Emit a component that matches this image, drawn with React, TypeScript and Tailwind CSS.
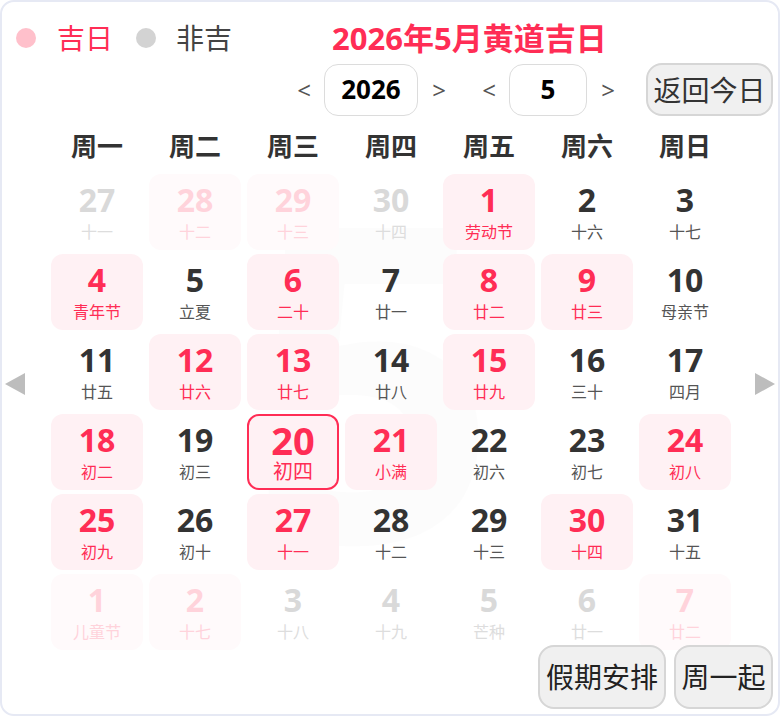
import React from 'react';

type Day = {
  d: number;
  lunar: string;
  good?: boolean;
  other?: boolean;
  today?: boolean;
};

const weeks = ['周一', '周二', '周三', '周四', '周五', '周六', '周日'];

const days: Day[] = [
  { d: 27, lunar: '十一', other: true },
  { d: 28, lunar: '十二', other: true, good: true },
  { d: 29, lunar: '十三', other: true, good: true },
  { d: 30, lunar: '十四', other: true },
  { d: 1, lunar: '劳动节', good: true },
  { d: 2, lunar: '十六' },
  { d: 3, lunar: '十七' },
  { d: 4, lunar: '青年节', good: true },
  { d: 5, lunar: '立夏' },
  { d: 6, lunar: '二十', good: true },
  { d: 7, lunar: '廿一' },
  { d: 8, lunar: '廿二', good: true },
  { d: 9, lunar: '廿三', good: true },
  { d: 10, lunar: '母亲节' },
  { d: 11, lunar: '廿五' },
  { d: 12, lunar: '廿六', good: true },
  { d: 13, lunar: '廿七', good: true },
  { d: 14, lunar: '廿八' },
  { d: 15, lunar: '廿九', good: true },
  { d: 16, lunar: '三十' },
  { d: 17, lunar: '四月' },
  { d: 18, lunar: '初二', good: true },
  { d: 19, lunar: '初三' },
  { d: 20, lunar: '初四', good: true, today: true },
  { d: 21, lunar: '小满', good: true },
  { d: 22, lunar: '初六' },
  { d: 23, lunar: '初七' },
  { d: 24, lunar: '初八', good: true },
  { d: 25, lunar: '初九', good: true },
  { d: 26, lunar: '初十' },
  { d: 27, lunar: '十一', good: true },
  { d: 28, lunar: '十二' },
  { d: 29, lunar: '十三' },
  { d: 30, lunar: '十四', good: true },
  { d: 31, lunar: '十五' },
  { d: 1, lunar: '儿童节', other: true, good: true },
  { d: 2, lunar: '十七', other: true, good: true },
  { d: 3, lunar: '十八', other: true },
  { d: 4, lunar: '十九', other: true },
  { d: 5, lunar: '芒种', other: true },
  { d: 6, lunar: '廿一', other: true },
  { d: 7, lunar: '廿二', other: true, good: true },
];

function DayCell({ day }: { day: Day }) {
  let box = 'bg-transparent';
  let num = 'text-[#333333]';
  let sub = 'text-[#555555]';

  if (day.other) {
    box = day.good ? 'bg-[#fffafb]' : 'bg-transparent';
    num = day.good ? 'text-[#ffd3db]' : 'text-[#d9d9d9]';
    sub = day.good ? 'text-[#ffd3db]' : 'text-[#dddddd]';
  } else if (day.good) {
    box = 'bg-[#fff1f4]';
    num = 'text-[#ff2d55]';
    sub = 'text-[#ff2d55]';
  }

  return (
    <div
      className={`flex h-[76px] w-[92px] flex-col items-center justify-center rounded-[12px] ${box} ${
        day.today ? 'border-2 border-[#ff2d55]' : ''
      }`}
    >
      <span className={`font-bold ${num} ${day.today ? 'text-[38px] leading-[40px]' : 'text-[32px] leading-[36px]'}`}>
        {day.d}
      </span>
      <span className={`${sub} ${day.today ? 'text-[20px] leading-[24px]' : 'mt-[4px] text-[16px] leading-[20px]'}`}>
        {day.lunar}
      </span>
    </div>
  );
}

export default function App() {
  return (
    <div
      className="relative h-[716px] w-[780px] overflow-hidden rounded-[14px] border-2 border-[#e6e9f4] bg-white"
      style={{ fontFamily: '"Noto Sans", "Noto Sans CJK SC", sans-serif' }}
    >
      {/* faint month watermark */}
      <div className="pointer-events-none absolute left-[245px] top-[150px] select-none text-[440px] font-bold leading-none text-[#000000]/[0.01]">
        5
      </div>

      <div className="relative flex flex-col">
        {/* legend + title */}
        <div className="mt-[14px] flex h-[44px] items-center pl-[14px]">
          <span className="h-5 w-5 rounded-full bg-[#ffc0cb]" />
          <span className="ml-[21px] text-[28px] leading-none text-[#ff2d55]">吉日</span>
          <span className="ml-[23px] h-5 w-5 rounded-full bg-[#d3d3d3]" />
          <span className="ml-[20px] text-[28px] leading-none text-[#444444]">非吉</span>
          <span className="ml-[100px] text-[31px] font-bold leading-none text-[#ff2d55]">2026年5月黄道吉日</span>
        </div>

        {/* year / month switch */}
        <div className="mt-[3px] flex h-[53px] items-center justify-end pr-[5px]">
          <span className="w-[24px] text-center text-[24px] leading-none text-[#555555]">&lt;</span>
          <div className="ml-[8px] flex h-[52px] w-[94px] items-center justify-center rounded-[14px] border border-[#dcdcdc] text-[26px] font-bold text-black">
            2026
          </div>
          <span className="ml-[9px] w-[24px] text-center text-[24px] leading-none text-[#555555]">&gt;</span>
          <span className="ml-[26px] w-[24px] text-center text-[24px] leading-none text-[#555555]">&lt;</span>
          <div className="ml-[8px] flex h-[52px] w-[78px] items-center justify-center rounded-[14px] border border-[#dcdcdc] text-[26px] font-bold text-black">
            5
          </div>
          <span className="ml-[9px] w-[24px] text-center text-[24px] leading-none text-[#555555]">&gt;</span>
          <button className="ml-[26px] flex h-[53px] w-[127px] items-center justify-center rounded-[16px] border-2 border-[#d6d6d6] bg-[#f0f0f0] text-[28px] text-[#333333]">
            返回今日
          </button>
        </div>

        {/* calendar body */}
        <div className="mt-[2px] flex">
          <div className="flex w-[46px] items-center pl-[3px]">
            <span className="block h-0 w-0 border-y-[11px] border-r-[20px] border-y-transparent border-r-[#bdbdbd]" />
          </div>

          <div className="w-[686px]">
            <div className="grid h-[56px] grid-cols-7 items-center">
              {weeks.map((w) => (
                <span key={w} className="text-center text-[26px] font-bold text-[#333333]">
                  {w}
                </span>
              ))}
            </div>
            <div className="grid grid-cols-7 gap-y-[4px]">
              {days.map((day, i) => (
                <div key={i} className="flex justify-center">
                  <DayCell day={day} />
                </div>
              ))}
            </div>
          </div>

          <div className="flex w-[44px] items-center justify-end pr-[3px]">
            <span className="block h-0 w-0 border-y-[11px] border-l-[20px] border-y-transparent border-l-[#bdbdbd]" />
          </div>
        </div>

        {/* bottom actions */}
        <div className="mt-[-5px] flex justify-end gap-[8px] pr-[5px]">
          <button className="flex h-[64px] w-[128px] items-center justify-center rounded-[16px] border-2 border-[#d6d6d6] bg-[#f0f0f0] text-[28px] text-[#222222]">
            假期安排
          </button>
          <button className="flex h-[64px] w-[99px] items-center justify-center rounded-[16px] border-2 border-[#d6d6d6] bg-[#f0f0f0] text-[28px] text-[#222222]">
            周一起
          </button>
        </div>
      </div>
    </div>
  );
}
